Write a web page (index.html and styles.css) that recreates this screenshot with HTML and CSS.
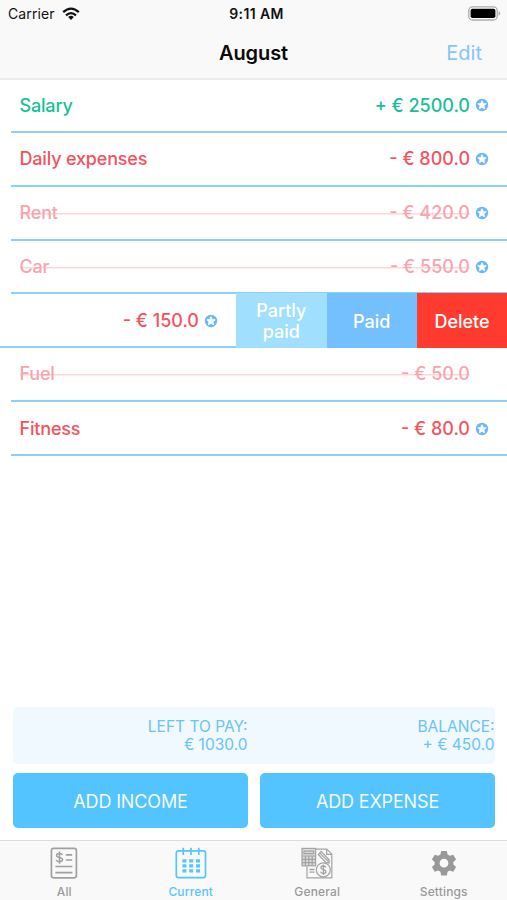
FILE: index.html
```html
<!DOCTYPE html>
<html lang="en">
<head>
<meta charset="utf-8">
<title>August</title>
<link rel="stylesheet" href="styles.css">
</head>
<body>
<svg class="defs" aria-hidden="true">
  <symbol id="star" viewBox="0 0 14 14">
    <circle cx="7" cy="7" r="6.2" fill="#6ab8fb"/>
    <path d="M7 2.7l1.25 2.8 3 .3-2.25 2 .65 3L7 9.3l-2.65 1.5.65-3-2.25-2 3-.3z" fill="#fff" stroke="#fff" stroke-width=".8" stroke-linejoin="round"/>
  </symbol>
</svg>
<div class="app">
  <header class="header">
    <div class="status">
      <div class="carrier"><span class="carrier-name">Carrier</span>
        <svg class="wifi" width="18" height="14" viewBox="0 0 18 14"><g fill="none" stroke="#111" stroke-width="2.3"><path d="M1.2 5.2Q9-1.9 16.8 5.2"/><path d="M4 8.3Q9 3.9 14 8.3"/></g><path d="M6.2 10Q9 7.6 11.8 10L9 13z" fill="#111"/></svg>
      </div>
      <div class="time">9:11 AM</div>
      <svg class="battery" width="33" height="15" viewBox="0 0 33 15"><rect x=".8" y=".8" width="28.4" height="13.2" rx="3.8" fill="#fff" stroke="#aaa" stroke-width="1.3"/><rect x="2.6" y="2.7" width="24.8" height="9.4" rx="1.8"/><path d="M30.6 5q1.6 1 1.6 2.4t-1.6 2.4z" fill="#aaa"/></svg>
    </div>
    <nav class="nav"><span></span><h1 class="title">August</h1><span class="edit">Edit</span></nav>
  </header>
  <main class="list">
    <div class="row income"><span class="name">Salary</span><span class="amount">+ € 2500.0</span><svg class="star"><use href="#star"/></svg></div>
    <div class="row"><span class="name">Daily expenses</span><span class="amount">- € 800.0</span><svg class="star"><use href="#star"/></svg></div>
    <div class="row paid"><div class="struck"><span class="name">Rent</span><span class="amount">- € 420.0</span></div><svg class="star"><use href="#star"/></svg></div>
    <div class="row paid"><div class="struck"><span class="name">Car</span><span class="amount">- € 550.0</span></div><svg class="star"><use href="#star"/></svg></div>
    <div class="swiped">
      <div class="row"><span class="amount">- € 150.0</span><svg class="star"><use href="#star"/></svg></div>
      <div class="action partly">Partly<br>paid</div>
      <div class="action full">Paid</div>
      <div class="action delete">Delete</div>
    </div>
    <div class="row paid"><div class="struck"><span class="name">Fuel</span><span class="amount">- € 50.0</span></div><span class="star"></span></div>
    <div class="row"><span class="name">Fitness</span><span class="amount">- € 80.0</span><svg class="star"><use href="#star"/></svg></div>
  </main>
  <section class="summary">
    <div class="total">LEFT TO PAY:<br>€ 1030.0</div>
    <div class="total">BALANCE:<br>+ € 450.0</div>
  </section>
  <section class="buttons">
    <div class="button">ADD INCOME</div>
    <div class="button">ADD EXPENSE</div>
  </section>
  <footer class="tabs">
    <div class="tab">
      <svg width="34" height="34" viewBox="0 0 34 34" fill="none" stroke="#a0a0a0" stroke-width="1.7"><rect x="4.4" y="2.4" width="25" height="29.4" rx="2.2"/><path d="M18.8 8.8h6.4M18.8 14h6.4M8.4 20.5h17M8.4 26.6h17"/><path d="M15.4 9Q14.9 7.4 12.4 7.4 9.6 7.4 9.6 9.4c0 2.8 6 1.2 6 4.2 0 1.5-1.2 2.2-3.1 2.2q-2.8 0-3.3-1.9M12.5 5.5v12.3" stroke-width="1.5"/></svg>
      <span>All</span>
    </div>
    <div class="tab active">
      <svg width="34" height="34" viewBox="0 0 34 34" fill="none" stroke="#55c5ff" stroke-width="1.7"><rect x="2.3" y="4.8" width="29.2" height="26.8" rx="2.2"/><path d="M9.2 1.8v7.2M17 1.8v7.2M24.8 1.8v7.2"/><path d="M8.4 14.9h17.6M8.4 19.9h17.6M8.4 24.9h17.6" stroke-width="3.1" stroke-dasharray="4 2.8"/></svg>
      <span>Current</span>
    </div>
    <div class="tab">
      <svg width="34" height="34" viewBox="0 0 34 34" fill="none" stroke="#a3a3a3" stroke-width="1.2"><path d="M16 3.2h10.8l5 5V31.8H7V20.2"/><path d="M26.6 3.4v5h5" /><rect x="2" y="2.4" width="13.6" height="17.4" fill="#dadada"/><path d="M4 5.2h9.6v2.4H4zM2 10h13.6M2 13.3h13.6M2 16.6h13.6M5.4 10v9.8M8.8 10v9.8M12.2 10v9.8"/><path d="M19.4 6.6l8.8 8.8M21.2 5.4l8 8.6-.2 3-3.2-.6-7.4-8z" stroke-width="1.3"/><path d="M9.5 23.5h5M9.5 26.2h5" stroke-width="1.3"/><circle cx="23.3" cy="23.8" r="7" fill="#f8f8f8"/><path d="M25.8 21.6q-.4-1.6-2.5-1.6-2.4 0-2.4 1.8c0 2.4 5.1 1.3 5.1 3.9q0 1.8-2.6 1.8-2.4 0-2.9-1.8M23.4 18.5v10.6" stroke-width="1.3"/></svg>
      <span>General</span>
    </div>
    <div class="tab">
      <svg width="34" height="34" viewBox="0 0 34 34"><path fill="#999" fill-rule="evenodd" d="M14.2 5h5.6l.8 3.6 2.1 1.2 3.6-1.1 2.8 4.8-2.7 2.5v2.4l2.7 2.5-2.8 4.8-3.6-1.1-2.1 1.2-.8 3.6h-5.6l-.8-3.6-2.1-1.2-3.6 1.1-2.8-4.8 2.7-2.5V16l-2.7-2.5 2.8-4.8 3.6 1.1 2.1-1.2zM17 12.8a4.4 4.4 0 1 0 0 8.8 4.4 4.4 0 0 0 0-8.8z"/></svg>
      <span>Settings</span>
    </div>
  </footer>
</div>
</body>
</html>
```
FILE: styles.css
```css
* { box-sizing: border-box; }
body { margin: 0; background: #fff; font-family: Inter, "Liberation Sans", sans-serif; }
.defs { display: none; }
.app { width: 507px; height: 900px; display: flex; flex-direction: column; overflow: hidden; }
.header { height: 80px; flex: none; background: #f9f9f9; border-bottom: 2px solid #ececec; }
.status { height: 27px; display: grid; grid-template-columns: 1fr auto 1fr; align-items: center; padding: 0 6px 0 8px; font-size: 14px; color: #111; }
.carrier { display: flex; align-items: center; gap: 7px; letter-spacing: .1px; }
.time { font-weight: 600; font-size: 14px; letter-spacing: .4px; padding-left: 4px; }
.battery { justify-self: end; }
.nav { height: 51px; display: grid; grid-template-columns: 1fr auto 1fr; align-items: center; padding: 0 25px; }
.title { margin: 0; font-size: 20px; font-weight: 600; color: #0a0a0a; letter-spacing: -.1px; }
.edit { justify-self: end; font-size: 20px; color: #83c6fa; }
.list { height: 377px; flex: none; display: grid; grid-template-rows: repeat(7, 1fr); margin-top: -1px; }
.row { display: flex; align-items: center; margin-left: 11px; padding: .4px 18px 0 8.5px; border-bottom: 2px solid #8cd0f8; color: #f4535d; font-size: 18px; font-weight: 500; white-space: nowrap; }
.income { color: #16c09a; }
.name { letter-spacing: -.18px; }
.amount { margin-left: auto; }
.star { width: 14px; height: 14px; margin-left: 5px; margin-top: .5px; flex: none; }
.struck { flex: 1; display: flex; background: linear-gradient(#ffd5da, #ffd5da) 0 12px / 100% 1.5px no-repeat; color: #f9a4ad; line-height: 24px; }
.swiped { display: grid; grid-template-columns: 236px 90.5px 90.5px 1fr; }
.swiped .row { margin-left: 0; }
.action { display: flex; align-items: center; justify-content: center; text-align: center; color: #fff; font-size: 18px; font-weight: 500; line-height: 21px; padding-top: 1px; margin-top: -1px; }
.partly { background: #a0e0fe; }
.full { background: #74bffe; }
.delete { background: #ff3b30; }
.summary { height: 57px; flex: none; margin: auto 12px 9px 13px; display: grid; grid-template-columns: 1fr 1fr; column-gap: 12px; align-items: center; background: #f0f9ff; border-radius: 5px; color: #69c3f3; font-size: 15.5px; line-height: 18.5px; text-align: right; }
.total { padding: 1px .5px 0 0; }
.buttons { height: 55px; flex: none; margin: 0 12px 12px 13px; display: grid; grid-template-columns: 1fr 1fr; column-gap: 12px; }
.button { display: flex; align-items: center; justify-content: center; padding-top: 1px; background: #53c4ff; border-radius: 5px; color: #f3fbff; font-size: 18px; letter-spacing: -.15px; }
.tabs { height: 60px; flex: none; display: grid; grid-template-columns: repeat(4, 1fr); padding-left: 1px; background: #f9f9f9; border-top: 1.5px solid #dcdcdc; }
.tab { display: flex; flex-direction: column; align-items: center; padding-top: 5px; gap: 5px; color: #999; font-size: 12px; font-weight: 500; line-height: 14px; letter-spacing: .15px; }
.active { color: #55c5ff; }
```
